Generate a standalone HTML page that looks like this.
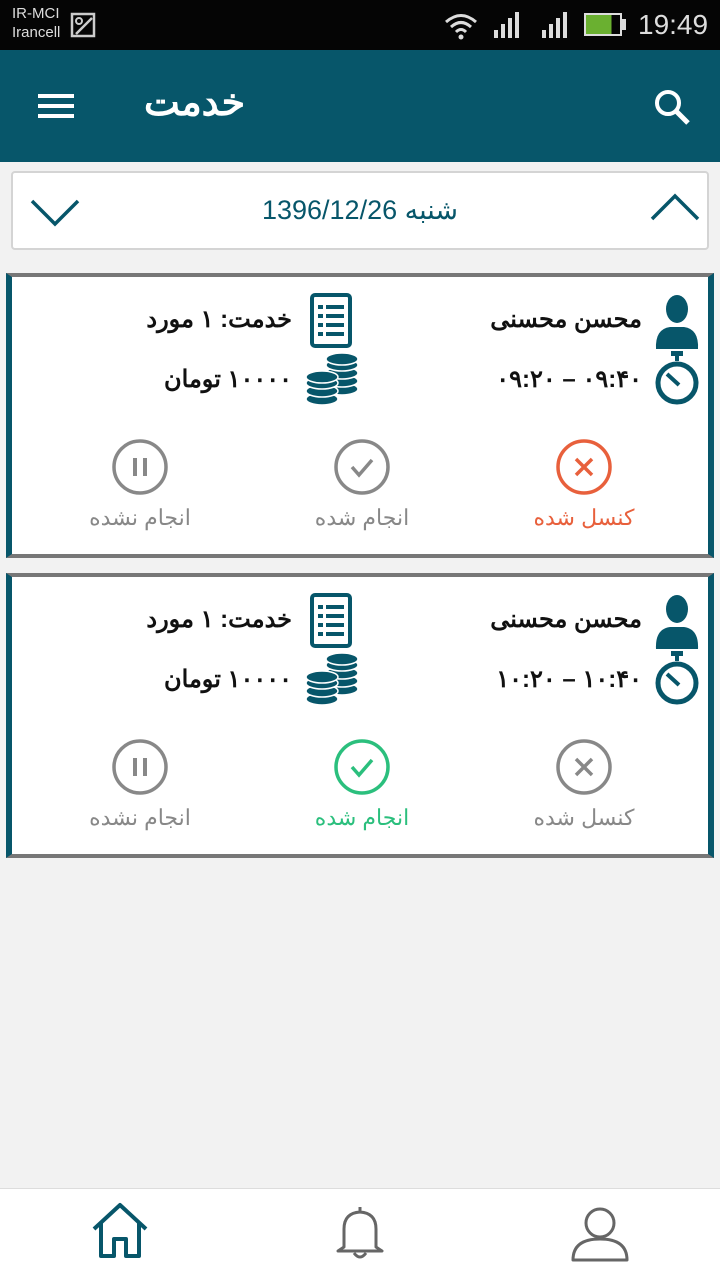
<!DOCTYPE html>
<html><head><meta charset="utf-8"><style>
*{margin:0;padding:0;box-sizing:border-box}
body{width:720px;height:1280px;background:#f2f2f2;font-family:"Liberation Sans","Noto Sans CJK SC",sans-serif;position:relative;overflow:hidden}
.abs{position:absolute}
.sb{top:0;left:0;width:720px;height:50px;background:#050505;color:#ddd}
.hd{top:50px;left:0;width:720px;height:112px;background:#07566a}
.date{top:171px;left:11px;width:698px;height:79px;background:#fff;border:2px solid #d4d4d4;border-radius:4px}
.card{left:6px;width:708px;height:285px;background:#fff;border-left:6px solid #07566a;border-right:6px solid #07566a;border-top:4px solid #777;border-bottom:4px solid #777}
.t{font-size:24px;font-weight:bold;color:#111;white-space:nowrap;direction:rtl}
.lbl{font-size:22px;white-space:nowrap;direction:rtl;text-align:center}
.nav{top:1188px;left:0;width:720px;height:92px;background:#fff;border-top:1px solid #ddd}
</style></head><body>
<div class="abs sb">
 <div class="abs" style="left:12px;top:4px;font-size:15px;line-height:19px">IR-MCI<br>Irancell</div>
 <svg class="abs" style="left:70px;top:12px" width="26" height="26" viewBox="0 0 26 26"><rect x="2" y="2" width="22" height="22" fill="none" stroke="#ccc" stroke-width="2.5"/><circle cx="9" cy="9" r="3" fill="none" stroke="#ccc" stroke-width="2"/><path d="M6 22L22 6" stroke="#ccc" stroke-width="2.5"/></svg>
 <svg class="abs" style="left:443px;top:12px" width="36" height="28" viewBox="0 0 36 28"><path d="M3 10Q18 -3 33 10M8 15Q18 6 28 15M13 20Q18 15 23 20" fill="none" stroke="#ddd" stroke-width="3"/><circle cx="18" cy="25" r="2.5" fill="#ddd"/></svg>
 <svg class="abs" style="left:492px;top:12px" width="90" height="28"><rect x="2" y="18" width="4" height="8" fill="#ddd"/><rect x="9" y="12" width="4" height="14" fill="#ddd"/><rect x="16" y="6" width="4" height="20" fill="#ddd"/><rect x="23" y="0" width="4" height="26" fill="#ddd"/><rect x="50" y="18" width="4" height="8" fill="#ddd"/><rect x="57" y="12" width="4" height="14" fill="#ddd"/><rect x="64" y="6" width="4" height="20" fill="#ddd"/><rect x="71" y="0" width="4" height="26" fill="#ddd"/></svg>
 <div class="abs" style="left:584px;top:13px;width:38px;height:23px;border:2px solid #ddd;background:linear-gradient(90deg,#6ab030 75%,transparent 75%)"></div>
 <div class="abs" style="left:622px;top:19px;width:4px;height:11px;background:#ddd"></div>
 <div class="abs" style="left:638px;top:9px;font-size:28px;color:#ddd">19:49</div>
</div>
<div class="abs hd">
 <div class="abs" style="left:38px;top:44px;width:36px;height:4px;background:#fff;box-shadow:0 10px 0 #fff,0 20px 0 #fff"></div>
 <div class="abs" style="left:144px;top:30px;font-size:38px;font-weight:bold;color:#fff">خدمت</div>
 <svg class="abs" style="left:652px;top:38px" width="40" height="40" viewBox="0 0 40 40"><circle cx="16" cy="15" r="11" fill="none" stroke="#fff" stroke-width="4"/><path d="M24 23L36 35" stroke="#fff" stroke-width="5"/></svg>
</div>
<div class="abs date">
 <svg class="abs" style="left:16px;top:24px" width="52" height="32"><path d="M3 4L26 27L49 4" fill="none" stroke="#07566a" stroke-width="3.5"/></svg>
 <div class="abs" style="left:0;width:694px;top:22px;text-align:center;font-size:27px;color:#07566a">شنبه 1396/12/26</div>
 <svg class="abs" style="left:636px;top:18px" width="52" height="32"><path d="M3 28L26 5L49 28" fill="none" stroke="#07566a" stroke-width="3.5"/></svg>
</div>

<div class="abs card" style="top:273px">
 <svg class="abs" style="left:642px;top:16px" width="46" height="56" viewBox="0 0 46 56"><ellipse cx="23" cy="16" rx="11" ry="14" fill="#07566a"/><path d="M2 56Q1 36 16 34L30 34Q45 36 44 56Z" fill="#07566a"/></svg>
 <div class="abs t" style="right:66px;top:28px">محسن محسنی</div>
 <svg class="abs" style="left:642px;top:74px" width="46" height="56" viewBox="0 0 46 56"><rect x="17" y="0" width="12" height="5" fill="#07566a"/><rect x="21" y="4" width="4" height="6" fill="#07566a"/><circle cx="23" cy="32" r="19" fill="none" stroke="#07566a" stroke-width="5"/><path d="M13 23L25 34" stroke="#07566a" stroke-width="4"/></svg>
 <div class="abs t" style="right:66px;top:88px;letter-spacing:3px">۰۹:۴۰ – ۰۹:۲۰</div>
 <svg class="abs" style="left:296px;top:16px" width="46" height="56" viewBox="0 0 46 56"><rect x="4" y="2" width="38" height="51" rx="3" fill="none" stroke="#07566a" stroke-width="4"/><g fill="#07566a"><rect x="10" y="12" width="5" height="4"/><rect x="18" y="12" width="18" height="4"/><rect x="10" y="21" width="5" height="4"/><rect x="18" y="21" width="18" height="4"/><rect x="10" y="30" width="5" height="4"/><rect x="18" y="30" width="18" height="4"/><rect x="10" y="39" width="5" height="4"/><rect x="18" y="39" width="18" height="4"/></g></svg>
 <div class="abs t" style="right:416px;top:28px">خدمت: ۱ مورد</div>
 <svg class="abs" style="left:292px;top:76px" width="56" height="54" viewBox="0 0 56 54"><g fill="#07566a" stroke="#fff" stroke-width="1.5"><ellipse cx="38" cy="36" rx="16" ry="6"/><ellipse cx="38" cy="28" rx="16" ry="6"/><ellipse cx="38" cy="20" rx="16" ry="6"/><ellipse cx="38" cy="12" rx="16" ry="6"/><ellipse cx="38" cy="6" rx="16" ry="6"/><ellipse cx="18" cy="46" rx="16" ry="6"/><ellipse cx="18" cy="38" rx="16" ry="6"/><ellipse cx="18" cy="30" rx="16" ry="6"/><ellipse cx="18" cy="24" rx="16" ry="6"/></g></svg>
 <div class="abs t" style="right:416px;top:88px">۱۰۰۰۰ تومان</div>
 <svg class="abs" style="left:542px;top:160px" width="60" height="60"><circle cx="30" cy="30" r="26" fill="none" stroke="#e8603c" stroke-width="3.5"/><path d="M22 22L38 38M38 22L22 38" stroke="#e8603c" stroke-width="3.5"/></svg>
 <div class="abs lbl" style="left:502px;width:140px;top:228px;color:#e8603c">کنسل شده</div>
 <svg class="abs" style="left:320px;top:160px" width="60" height="60"><circle cx="30" cy="30" r="26" fill="none" stroke="#888" stroke-width="3.5"/><path d="M20 30L27 38L40 23" fill="none" stroke="#888" stroke-width="3.5"/></svg>
 <div class="abs lbl" style="left:280px;width:140px;top:228px;color:#888">انجام شده</div>
 <svg class="abs" style="left:98px;top:160px" width="60" height="60"><circle cx="30" cy="30" r="26" fill="none" stroke="#888" stroke-width="3.5"/><path d="M25 21V39M35 21V39" stroke="#888" stroke-width="4"/></svg>
 <div class="abs lbl" style="left:58px;width:140px;top:228px;color:#888">انجام نشده</div>
</div>

<div class="abs card" style="top:573px">
 <svg class="abs" style="left:642px;top:16px" width="46" height="56" viewBox="0 0 46 56"><ellipse cx="23" cy="16" rx="11" ry="14" fill="#07566a"/><path d="M2 56Q1 36 16 34L30 34Q45 36 44 56Z" fill="#07566a"/></svg>
 <div class="abs t" style="right:66px;top:28px">محسن محسنی</div>
 <svg class="abs" style="left:642px;top:74px" width="46" height="56" viewBox="0 0 46 56"><rect x="17" y="0" width="12" height="5" fill="#07566a"/><rect x="21" y="4" width="4" height="6" fill="#07566a"/><circle cx="23" cy="32" r="19" fill="none" stroke="#07566a" stroke-width="5"/><path d="M13 23L25 34" stroke="#07566a" stroke-width="4"/></svg>
 <div class="abs t" style="right:66px;top:88px;letter-spacing:3px">۱۰:۴۰ – ۱۰:۲۰</div>
 <svg class="abs" style="left:296px;top:16px" width="46" height="56" viewBox="0 0 46 56"><rect x="4" y="2" width="38" height="51" rx="3" fill="none" stroke="#07566a" stroke-width="4"/><g fill="#07566a"><rect x="10" y="12" width="5" height="4"/><rect x="18" y="12" width="18" height="4"/><rect x="10" y="21" width="5" height="4"/><rect x="18" y="21" width="18" height="4"/><rect x="10" y="30" width="5" height="4"/><rect x="18" y="30" width="18" height="4"/><rect x="10" y="39" width="5" height="4"/><rect x="18" y="39" width="18" height="4"/></g></svg>
 <div class="abs t" style="right:416px;top:28px">خدمت: ۱ مورد</div>
 <svg class="abs" style="left:292px;top:76px" width="56" height="54" viewBox="0 0 56 54"><g fill="#07566a" stroke="#fff" stroke-width="1.5"><ellipse cx="38" cy="36" rx="16" ry="6"/><ellipse cx="38" cy="28" rx="16" ry="6"/><ellipse cx="38" cy="20" rx="16" ry="6"/><ellipse cx="38" cy="12" rx="16" ry="6"/><ellipse cx="38" cy="6" rx="16" ry="6"/><ellipse cx="18" cy="46" rx="16" ry="6"/><ellipse cx="18" cy="38" rx="16" ry="6"/><ellipse cx="18" cy="30" rx="16" ry="6"/><ellipse cx="18" cy="24" rx="16" ry="6"/></g></svg>
 <div class="abs t" style="right:416px;top:88px">۱۰۰۰۰ تومان</div>
 <svg class="abs" style="left:542px;top:160px" width="60" height="60"><circle cx="30" cy="30" r="26" fill="none" stroke="#888" stroke-width="3.5"/><path d="M22 22L38 38M38 22L22 38" stroke="#888" stroke-width="3.5"/></svg>
 <div class="abs lbl" style="left:502px;width:140px;top:228px;color:#888">کنسل شده</div>
 <svg class="abs" style="left:320px;top:160px" width="60" height="60"><circle cx="30" cy="30" r="26" fill="none" stroke="#2bbf7d" stroke-width="3.5"/><path d="M20 30L27 38L40 23" fill="none" stroke="#2bbf7d" stroke-width="3.5"/></svg>
 <div class="abs lbl" style="left:280px;width:140px;top:228px;color:#2bbf7d">انجام شده</div>
 <svg class="abs" style="left:98px;top:160px" width="60" height="60"><circle cx="30" cy="30" r="26" fill="none" stroke="#888" stroke-width="3.5"/><path d="M25 21V39M35 21V39" stroke="#888" stroke-width="4"/></svg>
 <div class="abs lbl" style="left:58px;width:140px;top:228px;color:#888">انجام نشده</div>
</div>

<div class="abs nav">
 <svg class="abs" style="left:90px;top:12px" width="60" height="58" viewBox="0 0 60 58"><path d="M4 28L30 4L56 28M11 22V55H24V38H36V55H49V22" fill="none" stroke="#07566a" stroke-width="4" stroke-linejoin="round"/></svg>
 <svg class="abs" style="left:332px;top:14px" width="56" height="58" viewBox="0 0 56 58"><path d="M28 4V8M12 44V26Q12 10 28 9Q44 10 44 26V44L50 48H6Z M22 50Q28 58 34 50" fill="none" stroke="#666" stroke-width="3" stroke-linejoin="round"/></svg>
 <svg class="abs" style="left:570px;top:14px" width="60" height="60" viewBox="0 0 60 60"><circle cx="30" cy="20" r="14" fill="none" stroke="#666" stroke-width="3"/><path d="M3 57Q3 36 30 36Q57 36 57 57Z" fill="none" stroke="#666" stroke-width="3" stroke-linejoin="round"/></svg>
</div>
</body></html>
